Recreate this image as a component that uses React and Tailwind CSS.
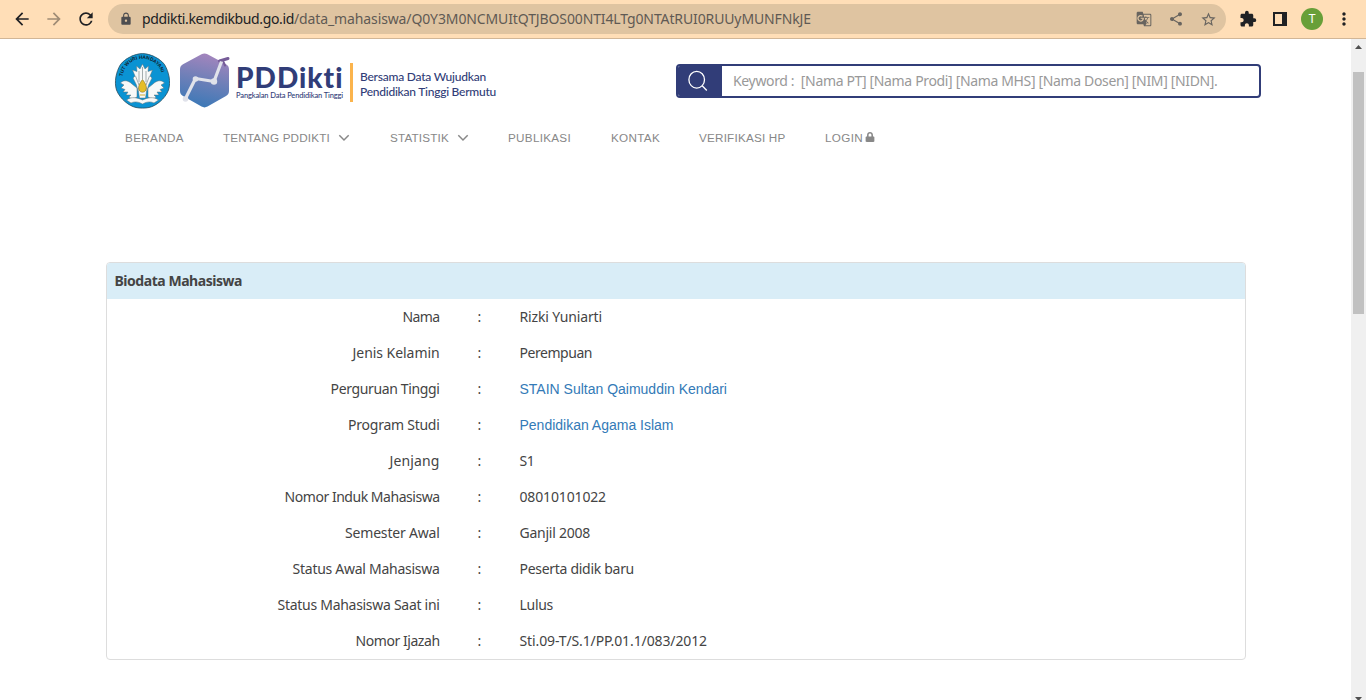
import { useLayoutEffect, useRef } from "react";
import {
  MdArrowBack,
  MdArrowForward,
  MdRefresh,
  MdLock,
  MdGTranslate,
  MdShare,
  MdStarBorder,
  MdExtension,
  MdMoreVert,
} from "react-icons/md";
import { FaLock } from "react-icons/fa";

// Single line of text whose tracking is adjusted to fill a given width.
function Fit({ w, className = "", children }) {
  const ref = useRef(null);
  useLayoutEffect(() => {
    const el = ref.current;
    el.style.letterSpacing = "0px";
    const natural = el.getBoundingClientRect().width;
    el.style.letterSpacing = (w - natural) / el.textContent.length + "px";
  }, [w]);
  return (
    <span ref={ref} className={"inline-block whitespace-pre " + className}>
      {children}
    </span>
  );
}

function Toolbar() {
  return (
    <header className="flex h-[39px] shrink-0 items-center border-b border-[#d1b697] bg-[#ffdeb7] text-[#202124]">
      <div className="flex w-[108px] items-center gap-3 pl-3">
        <MdArrowBack size={20} />
        <MdArrowForward size={20} className="text-[#a08c75]" />
        <MdRefresh size={20} />
      </div>
      <div className="flex h-[30px] w-[1118px] items-center rounded-full bg-[#dfc4a1] pl-[11px] text-[#5f5a54]">
        <MdLock size={14} className="mr-[9px] text-[#4d4d50]" />
        <div className="flex font-['Noto_Sans',sans-serif] text-[14px] leading-[20px]">
          <Fit w={152} className="text-[#202124]">pddikti.kemdikbud.go.id</Fit>
          <Fit w={517}>/data_mahasiswa/Q0Y3M0NCMUItQTJBOS00NTI4LTg0NTAtRUI0RUUyMUNFNkJE</Fit>
        </div>
        <div className="ml-auto flex items-center gap-4 pr-[9px] text-[#68645f]">
          <MdGTranslate size={16} />
          <MdShare size={16} />
          <MdStarBorder size={17} />
        </div>
      </div>
      <div className="flex items-center pl-[13px]">
        <MdExtension size={18} />
        <svg width="14" height="14" viewBox="0 0 14 14" className="ml-4">
          <path d="M0 0H14V14H0ZM2 2V12H9V2Z" fill="currentColor" fillRule="evenodd" />
        </svg>
        <div className="ml-[14px] flex size-[22px] items-center justify-center rounded-full bg-[#689f38] font-[Roboto,sans-serif] text-[12px] text-white">
          T
        </div>
        <MdMoreVert size={20} className="ml-[11px]" />
      </div>
    </header>
  );
}

function Emblem() {
  return (
    <svg width="56" height="57" viewBox="0 0 56 57">
      <defs>
        <path id="motto" d="M9.2 31 A20 20 0 1 1 47.8 31" />
      </defs>
      <path
        d="M28.5 0.6 C36 0.6 46 5.5 50.5 11.5 C55 19 57 29 54.5 37 C51 46 42 53 35 54.5 C31 55.3 26 55.3 22 54.5 C15 53 6 46 2.5 37 C0 29 2 19 6.5 11.5 C11 5.5 21 0.6 28.5 0.6Z"
        fill="#0a93d3"
        stroke="#264a5c"
        strokeWidth="0.8"
      />
      <text fontSize="4.9" fontWeight="700" fontFamily="Liberation Sans, sans-serif" fill="#12222c">
        <textPath href="#motto" startOffset="7.5">TUT WURI HANDAYANI</textPath>
      </text>
      <g fill="#f7f9f8" stroke="#5d7078" strokeWidth="0.5">
        <path d="M6.5 30 C10 26 15 28 18 31 L23 35 L23 44 C20 46 17 46 15 44 L17 42 L12 42 L14 39 L9 39 L11 36.5 L7 35 L10 32Z" />
        <path d="M50.5 30 C47 26 42 28 39 31 L34 35 L34 44 C37 46 40 46 42 44 L40 42 L45 42 L43 39 L48 39 L46 36.5 L50 35 L47 32Z" />
        <path d="M28.5 11 L31 16 L34.5 13 L34 18.5 L38.5 17 L36 23 L38 25 L34.5 32 L33 38 H24 L22.5 32 L19 25 L21 23 L18.5 17 L23 18.5 L22.5 13 L26 16Z" />
        <path d="M24 35 H33 L31.5 45 H25.5Z" />
        <path d="M12.5 47 C18 43 24 45 28.5 47 C33 45 39 43 44.5 47 L40 50 C36 48 32 49 28.5 51 C25 49 21 48 17 50Z" />
      </g>
      <path d="M25 18V29M28.5 14V26M32 18V29M21.5 23L25 32M35.5 23L32 32" stroke="#6b787c" strokeWidth="0.6" fill="none" />
      <path d="M28.5 26.5 C32 31 33 33.5 32 37 C30.5 40 26.5 40 25 37 C24 33.5 25 31 28.5 26.5Z" fill="#e5bd27" stroke="#695e28" strokeWidth="0.5" />
      <path d="M26 42H31" stroke="#d3a928" strokeWidth="1" />
    </svg>
  );
}

function Hexagon() {
  return (
    <svg width="53" height="56" viewBox="0 0 53 56" className="ml-[10px]">
      <defs>
        <linearGradient id="hex" x1="0.5" y1="0" x2="0.3" y2="1">
          <stop offset="0" stopColor="#a385bd" />
          <stop offset="0.45" stopColor="#7180b8" />
          <stop offset="1" stopColor="#3978b7" />
        </linearGradient>
      </defs>
      <path
        d="M21.5 1.2 Q24.5 -0.4 27.5 1.2 L46 11.3 Q49 13 49 16.3 V38 Q49 41.3 46 43 L27.5 53.6 Q24.5 55.2 21.5 53.6 L3 43 Q0 41.3 0 38 V16.3 Q0 13 3 11.3Z"
        fill="url(#hex)"
      />
      <path d="M39.5 8 L48 5.5" stroke="#765c98" strokeWidth="3" strokeLinecap="round" />
      <path d="M43.5 9 L45 12.5" stroke="#765c98" strokeWidth="2" strokeLinecap="round" />
      <path d="M5.5 45.5 L15.5 25.5 L34 28.5 L41.5 8.5" stroke="#e0e2ea" strokeWidth="3.2" fill="none" strokeLinejoin="round" />
      <circle cx="5.5" cy="46" r="2.8" fill="#e0e2ea" />
      <circle cx="15.5" cy="26" r="2.8" fill="#e0e2ea" />
      <circle cx="34" cy="28.5" r="3.2" fill="#e0e2ea" />
    </svg>
  );
}

function Brand() {
  return (
    <div className="flex h-[57px] items-start font-[Lato,sans-serif] text-[#313d78]">
      <Emblem />
      <Hexagon />
      <div className="ml-[3px] flex w-[107px] flex-col items-start pt-[11px]">
        <Fit w={108} className="h-[27px] text-[28px] leading-[27px] font-black">PDDikti</Fit>
        <Fit w={107} className="text-[7.5px] leading-[9px] font-medium">Pangkalan Data Pendidikan Tinggi</Fit>
      </div>
      <div className="mt-[10px] ml-[7px] h-[39px] w-[3px] bg-[#fbb44d]" />
      <div className="ml-[7px] flex flex-col items-start pt-[16px] text-[12px] leading-[15px] font-medium">
        <Fit w={126}>Bersama Data Wujudkan</Fit>
        <Fit w={136}>Pendidikan Tinggi Bermutu</Fit>
      </div>
    </div>
  );
}

function Search() {
  return (
    <div className="flex h-[34px] w-[585px] overflow-hidden rounded-[4px] border-2 border-[#313d78] bg-white">
      <div className="flex w-[44px] items-center justify-center bg-[#313d78] pr-[4px]">
        <svg width="22" height="22" viewBox="0 0 22 22" fill="none" stroke="#fff" strokeWidth="1.3">
          <ellipse cx="9.7" cy="9.7" rx="7.8" ry="8.4" />
          <path d="M15.2 15.8L19.8 20.5" />
        </svg>
      </div>
      <div className="pl-[11px] font-['Noto_Sans',sans-serif] text-[14px] leading-[30px] text-[#999]">
        <Fit w={484.5}>{"Keyword :  [Nama PT] [Nama Prodi] [Nama MHS] [Nama Dosen] [NIM] [NIDN]."}</Fit>
      </div>
    </div>
  );
}

function Chevron() {
  return (
    <svg width="12" height="8" viewBox="0 0 12 8" fill="none" stroke="currentColor" strokeWidth="1.5" className="ml-2">
      <path d="M1.3 1.3L6 6L10.7 1.3" />
    </svg>
  );
}

const menu = [
  { text: "BERANDA", w: 59, box: "w-[98px]" },
  { text: "TENTANG PDDIKTI", w: 107, box: "w-[167px]", more: true },
  { text: "STATISTIK", w: 59, box: "w-[118px]", more: true },
  { text: "PUBLIKASI", w: 63, box: "w-[103px]" },
  { text: "KONTAK", w: 49, box: "w-[88px]" },
  { text: "VERIFIKASI HP", w: 86.5, box: "w-[126px]" },
  { text: "LOGIN", w: 38, box: "w-[60px]", lock: true },
];

function Menu() {
  return (
    <nav className="mt-[18px] ml-[125px] flex h-[20px] items-center font-['Liberation_Sans',sans-serif] text-[11.7px] leading-[20px] text-[#888]">
      {menu.map((m) => (
        <div key={m.text} className={"flex items-center " + m.box}>
          <Fit w={m.w}>{m.text}</Fit>
          {m.more && <Chevron />}
          {m.lock && <FaLock size={10} className="mb-[2px] ml-[2px]" />}
        </div>
      ))}
    </nav>
  );
}

const rows = [
  ["Nama", 37, "Rizki Yuniarti", 82.5],
  ["Jenis Kelamin", 87, "Perempuan", 72.5],
  ["Perguruan Tinggi", 109, "STAIN Sultan Qaimuddin Kendari", 207.5, true],
  ["Program Studi", 91.5, "Pendidikan Agama Islam", 154, true],
  ["Jenjang", 50, "S1", 15],
  ["Nomor Induk Mahasiswa", 155, "08010101022", 86.5],
  ["Semester Awal", 94.5, "Ganjil 2008", 70.5],
  ["Status Awal Mahasiswa", 147, "Peserta didik baru", 114.5],
  ["Status Mahasiswa Saat ini", 162, "Lulus", 33.5],
  ["Nomor Ijazah", 84, "Sti.09-T/S.1/PP.01.1/083/2012", 187.5],
];

function Biodata() {
  return (
    <section className="mt-[114px] ml-[106px] w-[1140px] overflow-hidden rounded-[4px] border border-[#ddd] font-['Noto_Sans',sans-serif] text-[14px] leading-[36px] text-[#444]">
      <h1 className="h-[36px] bg-[#d9edf7] pl-[7.5px] font-bold">
        <Fit w={127.5}>Biodata Mahasiswa</Fit>
      </h1>
      {rows.map(([label, lw, value, vw, link]) => (
        <div key={label} className="flex h-[36px]">
          <div className="w-[332.6px] text-right">
            <Fit w={lw}>{label}</Fit>
          </div>
          <div className="w-[79.9px] pl-[37.9px]">:</div>
          {link ? (
            <a className="font-['Liberation_Sans',sans-serif] text-[#337ab7]">
              <Fit w={vw}>{value}</Fit>
            </a>
          ) : (
            <Fit w={vw}>{value}</Fit>
          )}
        </div>
      ))}
    </section>
  );
}

function Scrollbar() {
  return (
    <div className="flex w-[15px] flex-col items-center bg-[#f0f0f0]">
      <svg width="7" height="4" viewBox="0 0 7 4" className="mt-[6px]">
        <path d="M3.5 0L7 4H0Z" fill="#505050" />
      </svg>
      <div className="mt-[23px] h-[242px] w-[11px] bg-[#c1c1c1]" />
      <svg width="7" height="4" viewBox="0 0 7 4" className="mt-auto -mb-px">
        <path d="M3.5 4L7 0H0Z" fill="#505050" />
      </svg>
    </div>
  );
}

export default function App() {
  return (
    <div className="flex h-[700px] w-[1366px] flex-col overflow-hidden bg-white">
      <Toolbar />
      <div className="flex min-h-0 flex-1">
        <main className="flex-1">
          <div className="flex items-start pt-[14px] pl-[114px]">
            <div className="w-[562px]">
              <Brand />
            </div>
            <div className="pt-[11px]">
              <Search />
            </div>
          </div>
          <Menu />
          <Biodata />
        </main>
        <Scrollbar />
      </div>
    </div>
  );
}
